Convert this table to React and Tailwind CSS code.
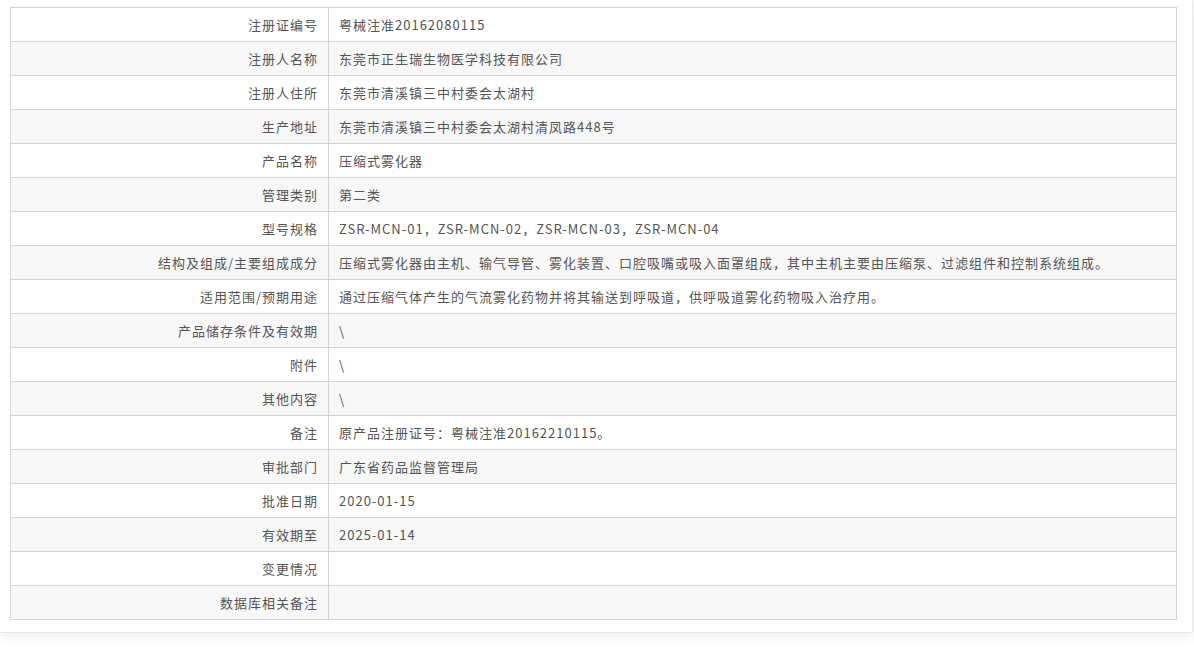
import React from "react";

const rows = [
  ["注册证编号", "粤械注准20162080115"],
  ["注册人名称", "东莞市正生瑞生物医学科技有限公司"],
  ["注册人住所", "东莞市清溪镇三中村委会太湖村"],
  ["生产地址", "东莞市清溪镇三中村委会太湖村清凤路448号"],
  ["产品名称", "压缩式雾化器"],
  ["管理类别", "第二类"],
  ["型号规格", "ZSR-MCN-01，ZSR-MCN-02，ZSR-MCN-03，ZSR-MCN-04"],
  ["结构及组成/主要组成成分", "压缩式雾化器由主机、输气导管、雾化装置、口腔吸嘴或吸入面罩组成，其中主机主要由压缩泵、过滤组件和控制系统组成。"],
  ["适用范围/预期用途", "通过压缩气体产生的气流雾化药物并将其输送到呼吸道，供呼吸道雾化药物吸入治疗用。"],
  ["产品储存条件及有效期", "\\"],
  ["附件", "\\"],
  ["其他内容", "\\"],
  ["备注", "原产品注册证号：粤械注准20162210115。"],
  ["审批部门", "广东省药品监督管理局"],
  ["批准日期", "2020-01-15"],
  ["有效期至", "2025-01-14"],
  ["变更情况", ""],
  ["数据库相关备注", ""],
];

export default function App() {
  return (
    <div className="bg-white min-h-[647px] font-['Noto_Sans_CJK_SC',sans-serif] text-[13px] tracking-[1px] text-[#555]">
      <div className="w-[1193px] border-r border-b border-[#e6e6e6] pl-[10px] pr-[15px] pt-[7px] pb-[12px] shadow-[0_6px_10px_rgba(0,0,0,0.06)]">
        <table className="w-full border-collapse border border-[#d4d4d4]">
          <tbody>
            {rows.map(([label, value], i) => (
              <tr key={label} className={i % 2 === 1 ? "bg-[#f7f7f7]" : "bg-white"}>
                <td className="w-[318px] h-[34px] border border-[#d4d4d4] pr-[10px] text-right leading-[20px]">
                  {label}
                </td>
                <td className="h-[34px] border border-[#d4d4d4] pl-[10px] leading-[20px]">
                  {value}
                </td>
              </tr>
            ))}
          </tbody>
        </table>
      </div>
    </div>
  );
}
